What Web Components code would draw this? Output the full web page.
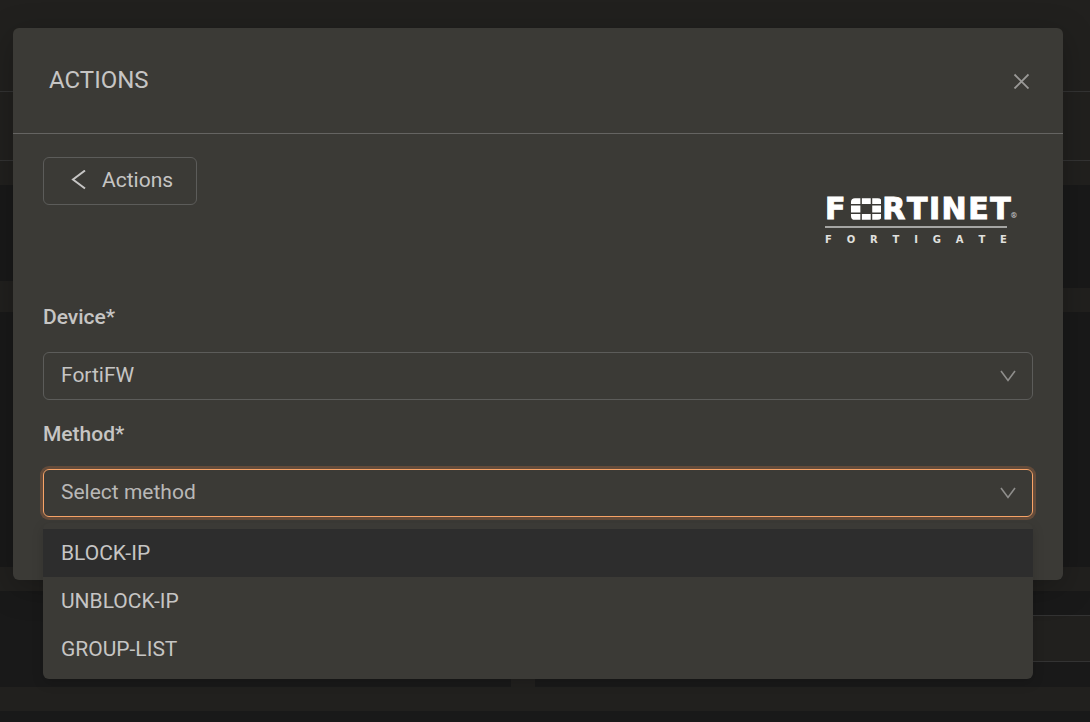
<!DOCTYPE html>
<html lang="en">
<head>
<meta charset="utf-8">
<meta name="viewport" content="width=device-width, initial-scale=1">
<title>Actions</title>
<style>
  :root {
    --page: #21201e;
    --card: #191919;
    --line: #333333;
    --surface: #3b3a36;
    --border: #5c5c5a;
    --text: #c6c5c4;
    --muted: #8f8e8c;
    --accent: #f8a367;
  }
  body {
    margin: 0;
    min-height: 100vh;
    display: grid;
    background: var(--page);
    color: var(--text);
    font: 21px/32px Roboto, sans-serif;
    overflow: hidden;
  }
</style>
</head>
<body>
<app-shell>
  <page-backdrop></page-backdrop>
  <modal-dialog slot="overlay" heading="ACTIONS">
    <action-toolbar></action-toolbar>
    <select-field label="Device*" options="FortiFW"></select-field>
    <select-field label="Method*" options="Select method,BLOCK-IP,UNBLOCK-IP,GROUP-LIST" open></select-field>
  </modal-dialog>
</app-shell>

<script>
class AppShell extends HTMLElement {
  constructor() {
    super();
    this.attachShadow({ mode: "open" }).innerHTML = `
      <style>
        :host { display: block; position: relative; min-width: 0; }
        .overlay { position: absolute; inset: 0; padding: 28px 27px 0 13px; }
      </style>
      <slot></slot>
      <div class="overlay"><slot name="overlay"></slot></div>`;
  }
}
customElements.define("app-shell", AppShell);

class PageBackdrop extends HTMLElement {
  constructor() {
    super();
    this.attachShadow({ mode: "open" }).innerHTML = `
      <style>
        :host { display: flex; flex-direction: column; gap: 24px; height: 100vh; }
        .bar { height: 68px; margin-top: 91px; border: solid var(--line); border-width: 1px 0; }
        .row { display: grid; grid-template-columns: 511fr 555fr; gap: 24px; }
        .row > div, .wide { background: var(--card); }
        .stats { height: 103px; align-items: start; }
        .stats > div { height: 96px; }
        .stats > div + div { height: 103px; }
        .wide { height: 255px; }
        .lists { height: 96px; }
        .head { margin-top: 24px; height: 45px; border: solid var(--line); border-width: 1px 0; background: var(--page); }
        .rest { flex: 1; }
      </style>
      <div class="bar"></div>
      <div class="row stats"><div></div><div></div></div>
      <div class="wide"></div>
      <div class="row lists"><div></div><div><div class="head"></div></div></div>
      <div class="wide rest"></div>`;
  }
}
customElements.define("page-backdrop", PageBackdrop);

class ModalDialog extends HTMLElement {
  constructor() {
    super();
    this.attachShadow({ mode: "open" }).innerHTML = `
      <style>
        :host { display: block; }
        section { background: var(--surface); border-radius: 6px; box-shadow: 0 8px 32px rgba(0, 0, 0, .25); }
        header { display: flex; justify-content: space-between; align-items: center; padding: 36px 30px 37px 36px; height: 32px; border-bottom: 1px solid #656462; }
        h1 { margin: 0; font-size: 24px; font-weight: 400; line-height: 32px; }
        button { display: grid; place-items: center; width: 24px; height: 24px; padding: 2px 0 0; border: 0; background: none; color: #9a9997; }
        .body { padding: 23px 30px 63px; }
      </style>
      <section role="dialog" aria-labelledby="title">
        <header>
          <h1 id="title"></h1>
          <button type="button" aria-label="Close">
            <svg width="16" height="16" viewBox="0 0 16 16" fill="none" stroke="currentColor" stroke-width="1.8"><path d="M1.5 1.5 15.5 15.5M15.5 1.5 1.5 15.5"/></svg>
          </button>
        </header>
        <div class="body"><slot></slot></div>
      </section>`;
  }
  connectedCallback() {
    this.shadowRoot.querySelector("h1").textContent = this.getAttribute("heading");
  }
}
customElements.define("modal-dialog", ModalDialog);

class ActionToolbar extends HTMLElement {
  constructor() {
    super();
    this.attachShadow({ mode: "open" }).innerHTML = `
      <style>
        :host { display: flex; justify-content: space-between; align-items: flex-start; height: 144px; }
        button { display: flex; align-items: center; gap: 16px; height: 48px; padding: 0 23px 2px 26px; border: 1px solid var(--border); border-radius: 6px; background: none; color: inherit; font: inherit; }
        vendor-logo { margin: 40px 16px 0 0; }
      </style>
      <button type="button">
        <svg width="16" height="20" viewBox="0 0 16 20" fill="none" stroke="currentColor" stroke-width="2"><path d="M15 .5 3 9.5 15 18.5"/></svg>
        Actions
      </button>
      <vendor-logo></vendor-logo>`;
  }
}
customElements.define("action-toolbar", ActionToolbar);

class VendorLogo extends HTMLElement {
  constructor() {
    super();
    this.attachShadow({ mode: "open" }).innerHTML = `
      <style>
        :host { display: block; width: 192px; color: #fff; }
        .mark { display: flex; align-items: center; height: 24px; font: 700 30px/24px "DejaVu Sans", sans-serif; -webkit-text-stroke: 1px #fff; }
        .word { display: flex; justify-content: space-between; width: 130px; }
        .first { width: 25px; }
        .mark svg { margin-right: 1px; }
        .reg { align-self: flex-end; font: 700 8px/10px Roboto, sans-serif; color: #ccc; -webkit-text-stroke: 0; }
        hr { width: 182px; height: 2px; margin: 5px 0 6px; border: 0; background: #a5a5a3; }
        .sub { display: flex; justify-content: space-between; width: 182px; font: 700 10px/12px "DejaVu Sans", sans-serif; color: #e0e0df; }
      </style>
      <div class="mark">
        <span class="first">F</span>
        <svg width="32" height="22" viewBox="0 0 32 22" fill="currentColor">
          <path d="M5 0H10.500V6H1V4Q1 0 5 0ZM12 0H21V6H12ZM22.500 0H28Q32 0 32 4V6H22.500ZM1 7.500H10.500V14.500H1ZM22.500 7.500H32V14.500H22.500ZM1 16H10.500V22H5Q1 22 1 18ZM12 16H21V22H12ZM22.500 16H32V18Q32 22 28 22H22.500Z"/>
        </svg>
        <span class="word"><span>R</span><span>T</span><span>I</span><span>N</span><span>E</span><span>T</span></span>
        <span class="reg">®</span>
      </div>
      <hr>
      <div class="sub"><span>F</span><span>O</span><span>R</span><span>T</span><span>I</span><span>G</span><span>A</span><span>T</span><span>E</span></div>`;
  }
}
customElements.define("vendor-logo", VendorLogo);

class SelectField extends HTMLElement {
  constructor() {
    super();
    this.attachShadow({ mode: "open" }).innerHTML = `
      <style>
        :host { display: block; margin-bottom: 18px; }
        :host(:last-child) { margin-bottom: 0; }
        label { display: block; font-weight: 500; line-height: 32px; padding-bottom: 19px; }
        .control { position: relative; display: grid; align-items: center; }
        select { grid-area: 1 / 1; appearance: none; width: 100%; height: 48px; margin: 0; padding: 0 48px 2px 17px; border: 1px solid var(--border); border-radius: 6px; background: none; color: inherit; font: inherit; outline: 0; }
        :host([open]) select { border-color: var(--accent); box-shadow: 0 0 0 3px #644b3a; color: #b9b8b7; }
        .arrow { grid-area: 1 / 1; justify-self: end; margin-right: 17px; color: var(--muted); pointer-events: none; }
        ul { position: absolute; top: calc(100% + 6px); left: 0; right: 0; margin: 0; padding: 6px 0; list-style: none; background: var(--surface); border-radius: 6px; box-shadow: 0 4px 12px rgba(0, 0, 0, .15); }
        li { padding: 8px 18px; line-height: 32px; }
        li[aria-selected="true"] { background: #2d2d2d; }
      </style>
      <label for="control"></label>
      <div class="control">
        <select id="control"></select>
        <svg class="arrow" width="16" height="12" viewBox="0 0 16 12" fill="none" stroke="currentColor" stroke-width="1.6"><path d="M1 1 8 10.5 15 1"/></svg>
      </div>`;
  }
  connectedCallback() {
    const root = this.shadowRoot;
    const names = this.getAttribute("options").split(",");
    root.querySelector("label").textContent = this.getAttribute("label");
    root.querySelector("select").append(...names.map(name => new Option(name)));
    if (this.hasAttribute("open")) {
      const list = document.createElement("ul");
      list.setAttribute("role", "listbox");
      names.slice(1).forEach((name, index) => {
        const item = document.createElement("li");
        item.setAttribute("role", "option");
        item.setAttribute("aria-selected", String(index === 0));
        item.textContent = name;
        list.append(item);
      });
      root.querySelector(".control").append(list);
    }
  }
}
customElements.define("select-field", SelectField);
</script>
</body>
</html>
